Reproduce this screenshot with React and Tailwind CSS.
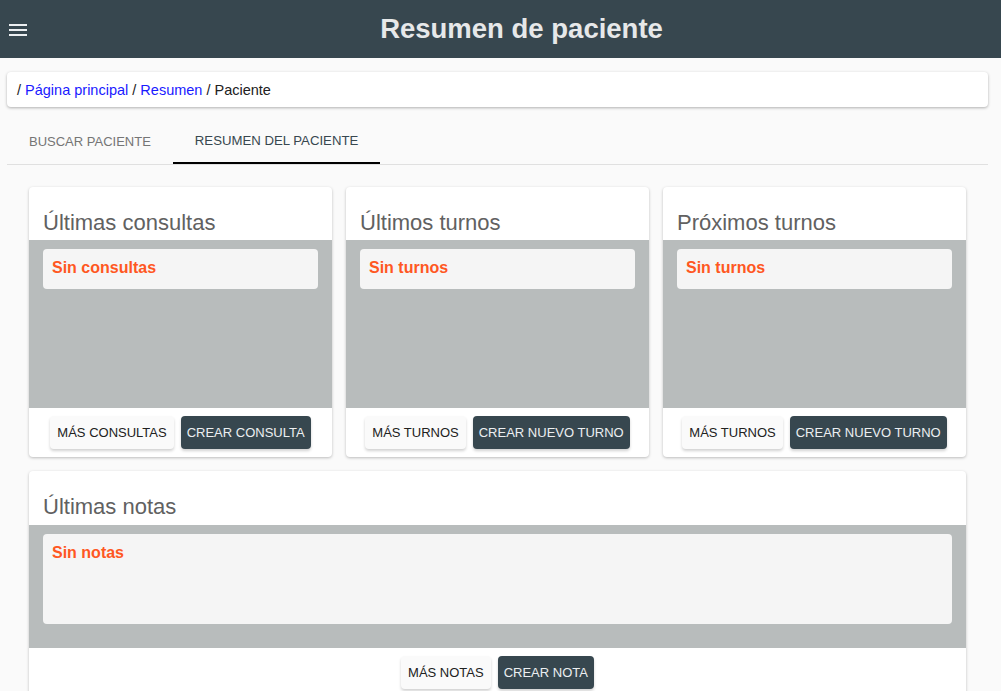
const cards = [
  { title: "Últimas consultas", empty: "Sin consultas", more: "Más consultas", create: "Crear consulta" },
  { title: "Últimos turnos", empty: "Sin turnos", more: "Más turnos", create: "Crear nuevo turno" },
  { title: "Próximos turnos", empty: "Sin turnos", more: "Más turnos", create: "Crear nuevo turno" },
];

function MenuIcon() {
  return (
    <svg width="24" height="24" viewBox="0 0 24 24" fill="#eceff1" aria-hidden>
      <path d="M3 18h18v-2H3v2zm0-5h18v-2H3v2zm0-7v2h18V6H3z" />
    </svg>
  );
}

function Buttons({ more, create }) {
  return (
    <div className="flex justify-center gap-[7px] pt-[8px] pb-[8px]">
      <button className="h-[33px] px-[7px] rounded-sm bg-[#fafafa] text-[13px] uppercase text-[#212121] shadow-[0_2px_3px_rgba(0,0,0,0.18)]">
        {more}
      </button>
      <button className="h-[33px] px-[6px] rounded-sm bg-[#37474f] text-[13px] uppercase text-[#eceff1] shadow-[0_2px_3px_rgba(0,0,0,0.18)]">
        {create}
      </button>
    </div>
  );
}

function Card({ title, empty, more, create, titlePb, bodyH, boxH }) {
  return (
    <div className="bg-white rounded-sm shadow-[0_1px_3px_rgba(0,0,0,0.25)]">
      <div className="pl-[14px] pt-[20px] text-[22px] leading-[32px] text-[#616161]" style={{ paddingBottom: titlePb }}>
        {title}
      </div>
      <div className="bg-[#b8bcbc] px-[14px] pt-[9px]" style={{ height: bodyH }}>
        <div className="bg-[#f5f5f5] rounded px-[9px] pt-[9px]" style={{ height: boxH }}>
          <p className="text-[16px] leading-[20px] font-bold text-[#ff5722]">{empty}</p>
        </div>
      </div>
      <Buttons more={more} create={create} />
    </div>
  );
}

export default function App() {
  return (
    <div className="min-h-screen bg-[#fafafa] font-['Liberation_Sans',Arial,sans-serif]">
      <header className="h-[58px] bg-[#37474f] flex items-center">
        <div className="w-[42px] pl-[6px] pt-[1px] flex items-center">
          <MenuIcon />
        </div>
        <h1 className="flex-1 text-center text-[27.5px] font-bold text-[#e6e8e9]">Resumen de paciente</h1>
      </header>

      <main className="pl-[7px] pr-[13px]">
        <nav className="mt-[14px] h-[35px] bg-white rounded-sm shadow-[0_1px_3px_rgba(0,0,0,0.3)] px-[10px] pt-[2px] flex items-center text-[14.5px] text-[#212121]">
          /&nbsp;<a className="text-[#1a1aff]">Página principal</a>&nbsp;/&nbsp;
          <a className="text-[#1a1aff]">Resumen</a>&nbsp;/ Paciente
        </nav>

        <div className="mt-[9px] flex border-b border-[#e0e0e0]">
          <div className="h-[48px] px-[22px] pt-[4px] flex items-center text-[13px] text-[#757575]">BUSCAR PACIENTE</div>
          <div className="h-[48px] px-[22px] pt-[4px] flex items-center text-[13.2px] text-[#37474f] border-b-2 border-black -mb-px">
            RESUMEN DEL PACIENTE
          </div>
        </div>

        <div className="px-[22px] pt-[22px]">
          <div className="grid grid-cols-3 gap-[14px]">
            {cards.map((c) => (
              <Card key={c.title} {...c} titlePb={1} bodyH={168} boxH={40} />
            ))}
          </div>
          <div className="mt-[14px]">
            <Card
              title="Últimas notas"
              empty="Sin notas"
              more="Más notas"
              create="Crear nota"
              titlePb={2}
              bodyH={123}
              boxH={90}
            />
          </div>
        </div>
      </main>
    </div>
  );
}
